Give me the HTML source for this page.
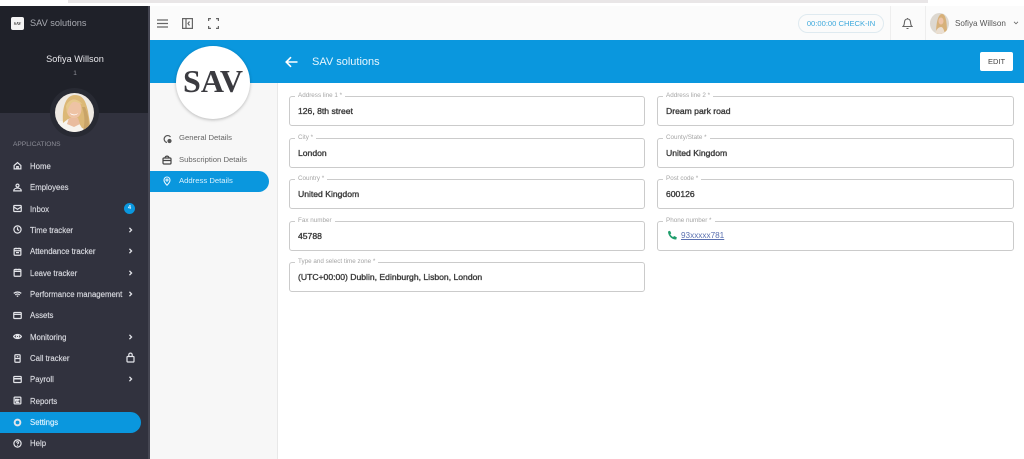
<!DOCTYPE html>
<html><head><meta charset="utf-8"><style>
*{box-sizing:border-box}
html,body{margin:0;padding:0;width:1024px;height:459px;overflow:hidden;background:#fff;font-family:"Liberation Sans",sans-serif}
#w{position:absolute;left:0;top:0;width:1024px;height:459px;filter:blur(.3px);overflow:hidden}
.a{position:absolute}
.t{position:absolute;white-space:nowrap}
.nav{position:absolute;left:30px;font-size:7.800px;color:#d9dae0;white-space:nowrap;line-height:12px;-webkit-text-stroke:.15px #d9dae0}
.ic{position:absolute;left:13px;width:9px;height:9px;fill:none;stroke:#e4e5ea;stroke-width:1.600}
.chev{position:absolute;left:128px;width:5px;height:6px;fill:none;stroke:#e4e5ea;stroke-width:1.800}
.fld{position:absolute;height:30px;border:1px solid #cbcbcb;border-radius:3px;background:#fff}
.fld.l{left:289px;width:356px}
.fld.r{left:657px;width:357px}
.fld label{position:absolute;left:5px;top:-5px;background:#fff;padding:0 3px;font-size:6.300px;line-height:8px;color:#a5a5a5;white-space:nowrap}
.fld b{position:absolute;left:8px;top:8px;font-size:8.600px;font-weight:400;-webkit-text-stroke:.35px #3a3a3a;line-height:12px;color:#3a3a3a;white-space:nowrap}
.sub{position:absolute;left:179px;font-size:7.700px;line-height:12px;color:#666;white-space:nowrap}
</style></head><body><div id="w">
<div class="a" style="left:68px;top:0;width:860px;height:3px;background:#e9e6e7"></div>

<div class="a" style="left:150px;top:6px;width:874px;height:34px;background:#fbfbfb"></div>
<div class="a" style="left:150px;top:40px;width:874px;height:43px;background:#0a97de"></div>
<div class="a" style="left:150px;top:83px;width:128px;height:376px;background:#f7f7f7"></div>
<div class="a" style="left:277px;top:83px;width:1px;height:376px;background:#e8e8e8"></div>

<div class="a" style="left:0;top:6px;width:150px;height:107px;background:#1f2129"></div>
<div class="a" style="left:0;top:113px;width:150px;height:346px;background:#31323e"></div>
<div class="a" style="left:148px;top:6px;width:2px;height:453px;background:#454652"></div>

<div class="a" style="left:11px;top:17px;width:13px;height:13px;background:#f4f4f4;border-radius:2px"></div>
<div class="t" style="left:11px;top:21px;width:13px;text-align:center;font:700 4px 'Liberation Serif',serif;color:#333">SAV</div>
<div class="t" style="left:30px;top:17px;font-size:9.200px;line-height:13px;color:#a9abb2">SAV solutions</div>
<div class="t" style="left:0;top:53px;width:150px;text-align:center;font-size:9.200px;line-height:13px;color:#e6e6ea">Sofiya Willson</div>
<div class="t" style="left:0;top:69px;width:150px;text-align:center;font-size:6.500px;line-height:10px;color:#8f9098">1</div>

<div class="a" style="left:50px;top:88px;width:49px;height:49px;border-radius:50%;background:#282a33"></div>
<svg class="a" style="left:55px;top:93px" width="39" height="39" viewBox="0 0 39 39">
<defs><clipPath id="c"><circle cx="19.500" cy="19.500" r="19.500"/></clipPath></defs>
<g clip-path="url(#c)"><rect width="39" height="39" fill="#efeae3"/>
<path d="M3 39V28l6 0 20 1 6 10z" fill="#f7f4ee"/>
<path d="M8 30C7 16 10 2 20 2c9 0 11 8 13 16 1 8 3 13 1 19l-7-2-5-8-9-1z" fill="#dcb877"/>
<ellipse cx="19" cy="16" rx="7.500" ry="9.500" fill="#eec3a4"/>
<path d="M14 25h9l2 6-6 3-7-3z" fill="#e9bc9e"/>
<path d="M11 13C14 5 23 5 27 11c-4-1-6-3-9-2-3 2-5 7-6 11z" fill="#e6c98c"/>
<path d="M15 20c3 2 6 2 8 0-1 3-7 3-8 0z" fill="#fff"/>
<path d="M27 14c3 8 3 16 1 24l5-1c2-8 0-16-3-23z" fill="#c9a468"/></g></svg>

<div class="t" style="left:13px;top:140px;font-size:6.600px;line-height:10px;color:#8d8e98">APPLICATIONS</div>

<svg class="ic" style="top:161px" viewBox="0 0 12 12"><path d="M1.500 6 6 2l4.500 4v4.500h-9zM5 10.500V7.500h2v3"/></svg><div class="nav" style="top:161px">Home</div>
<svg class="ic" style="top:183px" viewBox="0 0 12 12"><circle cx="6" cy="3.500" r="2"/><path d="M1 10.500c0-5 10-5 10 0z"/></svg><div class="nav" style="top:182px">Employees</div>
<svg class="ic" style="top:204px" viewBox="0 0 12 12"><rect x="1" y="2" width="10" height="8" rx="1"/><path d="m1 4 5 3 5-3"/></svg><div class="nav" style="top:204px">Inbox</div>
<div class="a" style="left:124px;top:203px;width:11px;height:11px;border-radius:50%;background:#0a97de;color:#e8f6ff;font:700 5.500px/11px 'Liberation Sans',sans-serif;text-align:center">4</div>
<svg class="ic" style="top:225px" viewBox="0 0 12 12"><circle cx="6" cy="6" r="4.800"/><path d="M6 3v3.200l2.200 1"/></svg><div class="nav" style="top:225px">Time tracker</div>
<svg class="chev" style="top:227px" viewBox="0 0 7 8"><path d="m2 1 3 3-3 3"/></svg>
<svg class="ic" style="top:247px" viewBox="0 0 12 12"><rect x="1.500" y="2" width="9" height="9" rx="1"/><path d="M1.500 5h9M4 1v2M8 1v2M4 7.500h4"/></svg><div class="nav" style="top:246px">Attendance tracker</div>
<svg class="chev" style="top:248px" viewBox="0 0 7 8"><path d="m2 1 3 3-3 3"/></svg>
<svg class="ic" style="top:268px" viewBox="0 0 12 12"><rect x="1.500" y="2" width="9" height="9" rx="1"/><path d="M1.500 4.500h9M4 1v2M8 1v2"/></svg><div class="nav" style="top:268px">Leave tracker</div>
<svg class="chev" style="top:270px" viewBox="0 0 7 8"><path d="m2 1 3 3-3 3"/></svg>
<svg class="ic" style="top:290px" viewBox="0 0 12 12"><path d="M1 4.500c3-2.500 7-2.500 10 0M3 6.500c2-1.500 4-1.500 6 0M5 8.500c.7-.5 1.300-.5 2 0"/></svg><div class="nav" style="top:289px">Performance management</div>
<svg class="chev" style="top:291px" viewBox="0 0 7 8"><path d="m2 1 3 3-3 3"/></svg>
<svg class="ic" style="top:311px" viewBox="0 0 12 12"><rect x="1" y="2" width="10" height="8" rx="1"/><path d="M1 4.500h10"/></svg><div class="nav" style="top:310px">Assets</div>
<svg class="ic" style="top:332px" viewBox="0 0 12 12"><path d="M.8 6C3 2.500 9 2.500 11.200 6 9 9.500 3 9.500.8 6z"/><circle cx="6" cy="6" r="1.500"/></svg><div class="nav" style="top:332px">Monitoring</div>
<svg class="chev" style="top:334px" viewBox="0 0 7 8"><path d="m2 1 3 3-3 3"/></svg>
<svg class="ic" style="top:354px" viewBox="0 0 12 12"><rect x="2.500" y="1" width="7" height="10" rx="1"/><path d="M2.500 6h7M5 3.500h2"/></svg><div class="nav" style="top:353px">Call tracker</div>
<svg class="a" style="left:126px;top:352px;fill:none;stroke:#e4e5ea;stroke-width:1.200" width="9" height="11" viewBox="0 0 9 11"><rect x="1" y="4.500" width="7" height="5.500" rx=".8"/><path d="M2.800 4.500V2.800a1.700 1.700 0 0 1 3.400 0v1.700"/></svg>
<svg class="ic" style="top:375px" viewBox="0 0 12 12"><rect x="1" y="2" width="10" height="8" rx="1"/><path d="M1 5h10" stroke-width="2"/></svg><div class="nav" style="top:374px">Payroll</div>
<svg class="chev" style="top:376px" viewBox="0 0 7 8"><path d="m2 1 3 3-3 3"/></svg>
<svg class="ic" style="top:396px" viewBox="0 0 12 12"><rect x="1.500" y="1.500" width="9" height="9" rx="1"/><path d="M3.500 4.500h3v2h-3zM3.500 8.500h5M8 4v2"/></svg><div class="nav" style="top:396px">Reports</div>

<div class="a" style="left:0;top:412px;width:141px;height:21px;background:#0a97de;border-radius:0 11px 11px 0"></div>
<svg class="ic" style="top:418px" viewBox="0 0 12 12"><circle cx="6" cy="6" r="3.800" stroke-width="2.600"/></svg><div class="nav" style="top:417px;color:#dff3ff;-webkit-text-stroke:.15px #dff3ff">Settings</div>
<svg class="ic" style="top:439px" viewBox="0 0 12 12"><circle cx="6" cy="6" r="4.800"/><path d="M4.600 4.800c.3-1.800 2.900-1.500 2.800.1 0 1-1.300 1-1.400 2.200M6 8.200v1"/></svg><div class="nav" style="top:438px">Help</div>

<svg class="a" style="left:157px;top:19px;fill:none;stroke:#666;stroke-width:1.300" width="11" height="9" viewBox="0 0 11 9"><path d="M0 1h11M0 4.500h11M0 8h11"/></svg>
<svg class="a" style="left:182px;top:18px;fill:none;stroke:#666;stroke-width:1.200" width="11" height="11" viewBox="0 0 11 11"><rect x=".6" y=".6" width="9.800" height="9.800"/><path d="M4 .6v9.800M7.500 3.500 6 5.500l1.500 2"/></svg>
<svg class="a" style="left:208px;top:18px;fill:none;stroke:#666;stroke-width:1.200" width="11" height="11" viewBox="0 0 11 11"><path d="M.6 3V.6H3M8 .6h2.400V3M10.400 8v2.400H8M3 10.400H.6V8"/></svg>

<div class="a" style="left:798px;top:14px;width:86px;height:19px;border:1px solid #dfeaf0;border-radius:10px"></div>
<div class="t" style="left:798px;top:17px;width:86px;text-align:center;font-size:7.600px;line-height:13px;color:#3ea9dc">00:00:00 CHECK-IN</div>
<div class="a" style="left:890px;top:6px;width:1px;height:34px;background:#eee"></div>
<div class="a" style="left:925px;top:6px;width:1px;height:34px;background:#eee"></div>
<svg class="a" style="left:902px;top:17px;fill:none;stroke:#666;stroke-width:1.100" width="11" height="13" viewBox="0 0 11 13"><path d="M1 9.500c1.300-1 1.300-2.500 1.500-4.500C2.700 3 4 2 5.500 2S8.300 3 8.500 5c.2 2 .2 3.500 1.500 4.500zM4.500 11.500h2M5.500 1v1"/></svg>
<svg class="a" style="left:930px;top:13px" width="19" height="21" viewBox="0 0 19 21">
<defs><clipPath id="d"><ellipse cx="9.500" cy="10.500" rx="9.500" ry="10.500"/></clipPath></defs>
<g clip-path="url(#d)"><rect width="19" height="21" fill="#ddd8d0"/><path d="M6 21C6 10 8 1 12 1s5 9 5 20z" fill="#d7b17a"/><ellipse cx="11" cy="8" rx="2.500" ry="3.500" fill="#eec4a8"/><path d="M5 21c1-5 4-7 6-7s3 3 4 7z" fill="#eadfd2"/></g></svg>
<div class="t" style="left:955px;top:17px;font-size:8.100px;line-height:13px;color:#555">Sofiya Willson</div>
<svg class="a" style="left:1013px;top:21px;fill:none;stroke:#666;stroke-width:1" width="6" height="4" viewBox="0 0 7 5"><path d="m1 1 2.500 2.500L6 1"/></svg>

<svg class="a" style="left:285px;top:56px;fill:none;stroke:#fff;stroke-width:1.600" width="13" height="12" viewBox="0 0 13 12"><path d="M12.500 6H1.500M6 1.200 1.200 6 6 10.800"/></svg>
<div class="t" style="left:312px;top:55px;font-size:11px;line-height:15px;color:#e6f5fd">SAV solutions</div>
<div class="a" style="left:980px;top:52px;width:33px;height:19px;background:#fff;border-radius:2px;font-size:7.500px;line-height:19px;text-align:center;color:#444">EDIT</div>

<div class="a" style="left:176px;top:46px;width:74px;height:73px;border-radius:50%;background:#fff;box-shadow:0 1px 3px rgba(0,0,0,.25)"></div>
<div class="t" style="left:176px;top:63px;width:74px;text-align:center;font:700 32px/36px 'Liberation Serif',serif;color:#3b3b40">SAV</div>

<svg class="a" style="left:163px;top:134px;fill:none;stroke:#555;stroke-width:1.200" width="9" height="10" viewBox="0 0 9 10"><path d="M7.500 3A3.500 3.500 0 1 0 4 8.500"/><circle cx="6.500" cy="7" r="1.500" fill="#555"/></svg><div class="sub" style="top:132px">General Details</div>
<svg class="a" style="left:162px;top:155px;fill:none;stroke:#444;stroke-width:1.200" width="10" height="10" viewBox="0 0 10 10"><rect x="1" y="3" width="8" height="6" rx="1"/><path d="M3 3c0-2.500 4-2.500 4 0M1 5.500h8"/></svg><div class="sub" style="top:154px">Subscription Details</div>
<div class="a" style="left:150px;top:171px;width:119px;height:21px;background:#0a97de;border-radius:0 11px 11px 0"></div>
<svg class="a" style="left:163px;top:176px;fill:none;stroke:#e8f6ff;stroke-width:1.100" width="8" height="10" viewBox="0 0 8 10"><path d="M4 9.200C1.500 6.800 1 5.500 1 4a3 3 0 0 1 6 0c0 1.500-.5 2.800-3 5.200z"/><circle cx="4" cy="4" r="1"/></svg><div class="sub" style="top:175px;color:#d9f1fd">Address Details</div>

<div class="fld l" style="top:96px"><label>Address line 1 *</label><b>126, 8th street</b></div>
<div class="fld r" style="top:96px"><label>Address line 2 *</label><b>Dream park road</b></div>
<div class="fld l" style="top:138px"><label>City *</label><b>London</b></div>
<div class="fld r" style="top:138px"><label>County/State *</label><b>United Kingdom</b></div>
<div class="fld l" style="top:179px"><label>Country *</label><b>United Kingdom</b></div>
<div class="fld r" style="top:179px"><label>Post code *</label><b>600126</b></div>
<div class="fld l" style="top:221px"><label>Fax number</label><b>45788</b></div>
<div class="fld r" style="top:221px"><label>Phone number *</label>
<svg class="a" style="left:9px;top:8px" width="11" height="11" viewBox="0 0 11 11"><path d="M1 1.500 3 .8l1.300 2.400-1 1c.6 1.300 1.500 2.200 2.800 2.800l1-1L9.800 7.300 9.300 9.500C5 9.800 1 5.800 1 1.500z" fill="#1f9d6b"/></svg>
<span class="t" style="left:23px;top:8px;font-size:8.200px;line-height:12px;color:#5a70b0;text-decoration:underline">93xxxxx781</span></div>
<div class="fld l" style="top:262px"><label>Type and select time zone *</label><b>(UTC+00:00) Dublin, Edinburgh, Lisbon, London</b></div>
</div></body></html>
